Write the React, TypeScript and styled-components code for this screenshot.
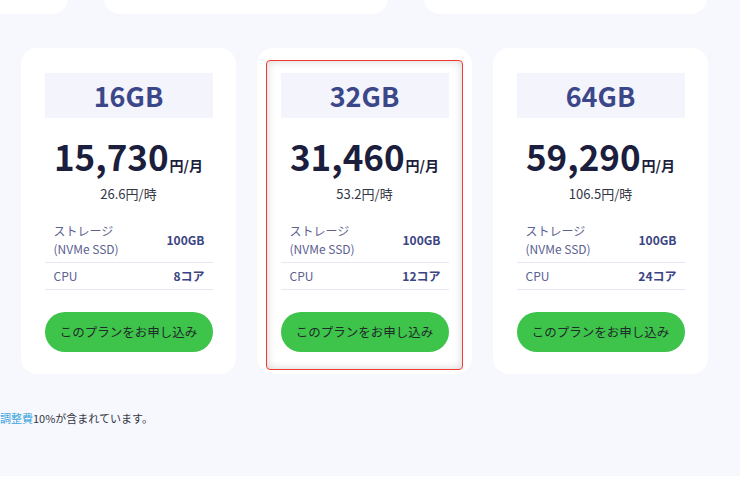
import React from 'react';
import styled, { createGlobalStyle } from 'styled-components';

const GlobalStyle = createGlobalStyle`
  html, body {
    margin: 0;
    padding: 0;
    background: #ffffff;
    font-family: "Noto Sans CJK JP", "Noto Sans", sans-serif;
  }
  * { box-sizing: border-box; }
`;

const Section = styled.div`
  background: #f7f7fe;
  width: 740px;
  height: 476px;
  overflow: hidden;
`;

const TopRow = styled.div`
  display: flex;
  margin-left: -22px;
  gap: 36px;
`;

const TopCard = styled.div<{ $w: number }>`
  width: ${p => p.$w}px;
  height: 40px;
  margin-top: -26px;
  background: #ffffff;
  border-radius: 0 0 16px 16px;
`;

const PlanRow = styled.div`
  display: flex;
  gap: 21px;
  padding: 34px 0 0 21px;
`;

const Card = styled.div`
  width: 215px;
  background: #ffffff;
  border-radius: 16px;
  padding: 12px 9px 4px;
`;

const Inner = styled.div<{ $selected?: boolean }>`
  border: 1.5px solid ${p => (p.$selected ? '#f33a2e' : 'transparent')};
  border-radius: 4px;
  box-shadow: ${p => (p.$selected ? 'inset 0 0 8px rgba(0, 0, 0, 0.18)' : 'none')};
  padding: 11.5px 13.5px 17.5px;
  display: flex;
  flex-direction: column;
  align-items: stretch;
`;

const Header = styled.div`
  height: 45px;
  background: #f3f4fc;
  color: #3b4788;
  font-size: 27px;
  font-weight: 700;
  display: flex;
  align-items: center;
  justify-content: center;
`;

const Price = styled.div`
  margin-top: 18px;
  text-align: center;
  color: #1b1e3c;
  font-size: 35px;
  font-weight: 700;
  line-height: 40px;
  height: 40px;
`;

const Unit = styled.span`
  font-size: 14px;
  line-height: 1;
  margin-left: 1px;
`;

const Hourly = styled.div`
  margin-top: 9px;
  text-align: center;
  font-size: 13px;
  line-height: 18px;
  color: #333645;
`;

const Specs = styled.div`
  margin-top: 19px;
  display: flex;
  flex-direction: column;
`;

const SpecRow = styled.div`
  display: flex;
  align-items: center;
  justify-content: space-between;
  padding: 4px 8px 4px 9px;
  border-bottom: 1px solid #e6e8f6;
  &:first-child { padding-top: 0; }
`;

const SpecLabel = styled.div`
  font-size: 12px;
  line-height: 18px;
  color: #5b6191;
`;

const SpecValue = styled.div`
  font-size: 12px;
  line-height: 18px;
  font-weight: 700;
  color: #3b4583;
`;

const ApplyButton = styled.button`
  margin-top: 22px;
  height: 40px;
  border: none;
  border-radius: 20px;
  background: #3ec44b;
  color: #1f2b2a;
  font-family: inherit;
  font-size: 12.5px;
  font-weight: 400;
  cursor: pointer;
`;

const Note = styled.div`
  margin-top: 36px;
  font-size: 11px;
  line-height: 16px;
  color: #33363f;
`;

const NoteLink = styled.span`
  color: #3aa6dc;
`;

const plans = [
  { size: '16GB', price: '15,730', hourly: '26.6', cpu: '8コア' },
  { size: '32GB', price: '31,460', hourly: '53.2', cpu: '12コア', selected: true },
  { size: '64GB', price: '59,290', hourly: '106.5', cpu: '24コア' },
];

export default function App() {
  return (
    <>
      <GlobalStyle />
      <Section>
        <TopRow>
          <TopCard $w={90} />
          <TopCard $w={284} />
          <TopCard $w={283} />
        </TopRow>
        <PlanRow>
          {plans.map(plan => (
            <Card key={plan.size}>
              <Inner $selected={plan.selected}>
                <Header>{plan.size}</Header>
                <Price>
                  {plan.price}
                  <Unit>円/月</Unit>
                </Price>
                <Hourly>{plan.hourly}円/時</Hourly>
                <Specs>
                  <SpecRow>
                    <SpecLabel>
                      ストレージ
                      <br />
                      (NVMe SSD)
                    </SpecLabel>
                    <SpecValue>100GB</SpecValue>
                  </SpecRow>
                  <SpecRow>
                    <SpecLabel>CPU</SpecLabel>
                    <SpecValue>{plan.cpu}</SpecValue>
                  </SpecRow>
                </Specs>
                <ApplyButton>このプランをお申し込み</ApplyButton>
              </Inner>
            </Card>
          ))}
        </PlanRow>
        <Note>
          <NoteLink>調整費</NoteLink>10%が含まれています。
        </Note>
      </Section>
    </>
  );
}
